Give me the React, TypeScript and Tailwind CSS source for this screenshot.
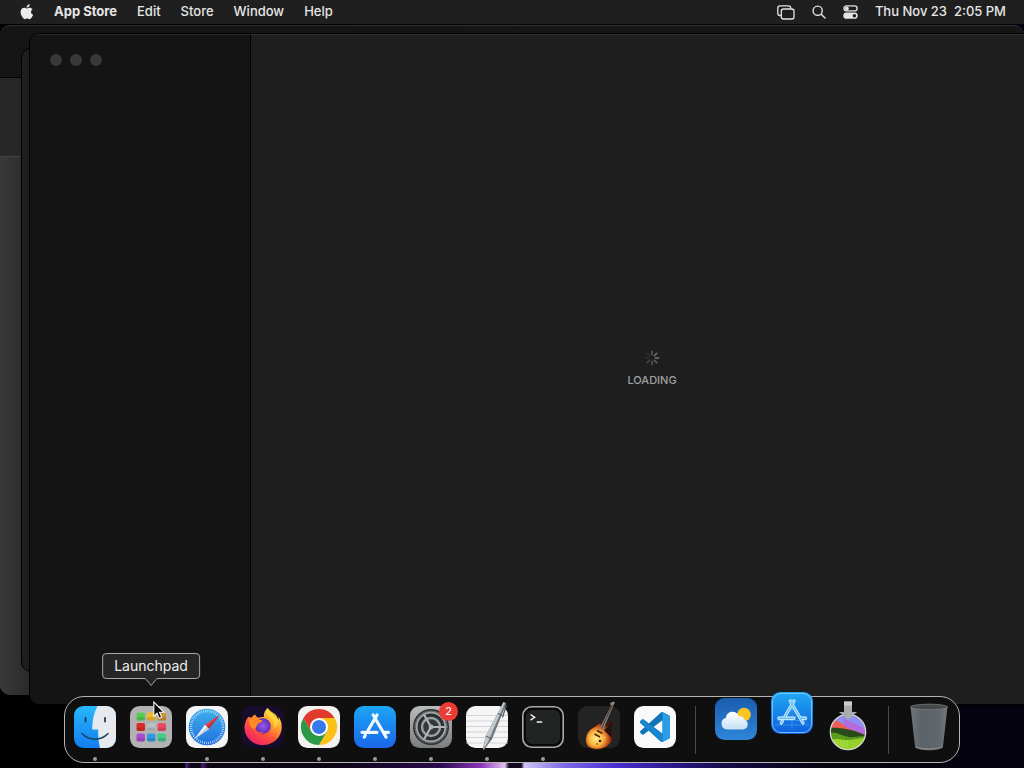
import { useId } from "react";
import type { ReactNode } from "react";

const MENUS = ["Edit", "Store", "Window", "Help"];

const AppleLogo = () => (
  <svg viewBox="0 0 14 17" className="h-4 w-[14px]" fill="#ececec" aria-hidden="true">
    <path d="M9.9 0c.1 1-.3 2-.9 2.700-.6.7-1.500 1.200-2.400 1.100C6.500 2.900 7 1.900 7.500 1.300 8.100.6 9.100.1 9.900 0Z" />
    <path d="M13 5.700c-1.100.7-1.700 1.600-1.700 2.800 0 1.400.8 2.500 2.200 3-.3.900-.8 1.800-1.400 2.700-.7 1-1.300 1.900-2.400 1.900-1 0-1.300-.6-2.500-.6s-1.600.6-2.500.6c-1 0-1.700-.9-2.400-1.900C1 12.400.2 10.500.2 8.600c0-3 1.900-4.500 3.800-4.500 1.100 0 2 .7 2.700.7.600 0 1.700-.8 3-.8 1.300 0 2.500.6 3.300 1.700Z" />
  </svg>
);

const MirrorIcon = () => (
  <svg viewBox="0 0 18 15" className="h-[15px] w-[18px]" fill="none" stroke="#e4e4e4" strokeWidth="1.300" aria-hidden="true">
    <path d="M4 10.500H3A2.200 2.200 0 0 1 .8 8.300V3A2.200 2.200 0 0 1 3 .8h8.500A2.200 2.200 0 0 1 13.700 3v.7" />
    <rect x="4.300" y="4" width="12.700" height="10" rx="2.200" />
  </svg>
);

const SearchIcon = () => (
  <svg viewBox="0 0 14 14" className="h-[14px] w-[14px]" fill="none" stroke="#e4e4e4" strokeWidth="1.400" strokeLinecap="round" aria-hidden="true">
    <circle cx="5.700" cy="5.700" r="4.600" />
    <path d="m9.200 9.200 3.800 3.900" />
  </svg>
);

const ControlCenterIcon = () => (
  <svg viewBox="0 0 15 14" className="h-[14px] w-[15px]" aria-hidden="true">
    <rect x=".9" y=".9" width="13.200" height="5" rx="2.500" fill="none" stroke="#e4e4e4" strokeWidth="1.300" />
    <circle cx="3.800" cy="3.400" r="2" fill="#e4e4e4" />
    <rect x=".3" y="7.600" width="14.400" height="6.200" rx="3.100" fill="#e4e4e4" />
    <circle cx="11.400" cy="10.700" r="1.800" fill="#202020" />
  </svg>
);

const FinderIcon = () => {
  const id = useId();
  return (
    <svg viewBox="0 0 42 42" aria-hidden="true">
      <defs>
        <linearGradient id={id} x2="0" y2="1">
          <stop stopColor="#27b9fa" />
          <stop offset="1" stopColor="#137df0" />
        </linearGradient>
        <clipPath id={`${id}c`}>
          <rect width="42" height="42" rx="9.500" />
        </clipPath>
      </defs>
      <g clipPath={`url(#${id}c)`}>
        <rect width="42" height="42" fill={`url(#${id})`} />
        <path d="M23.500 0C20 7 18.300 14 18.200 23.500h6C24 30 24.500 36 26 42h16V0Z" fill="#e6e9ee" />
      </g>
      <path d="M11.500 11.800v3.800M31 11.800v3.800" stroke="#14304c" strokeWidth="1.700" strokeLinecap="round" />
      <path d="M8 27.500c7 7.500 19 7.500 26 0" fill="none" stroke="#1c4263" strokeWidth="1.500" strokeLinecap="round" />
    </svg>
  );
};

const PADS = ["#52cf4f", "#f3bb25", "#c9952b", "#d92b28", "#b9c2c0", "#ec4a62", "#a94cd2", "#2e9ce5", "#44c98a"];

const LaunchpadIcon = () => (
  <svg viewBox="0 0 42 42" aria-hidden="true">
    <rect width="42" height="42" rx="9.500" fill="#b3b2b3" />
    {PADS.map((color, i) => (
      <g key={color}>
        <rect x={6.5 + (i % 3) * 10.5} y={6.5 + Math.floor(i / 3) * 10.5} width="8.500" height="8" rx="1.800" fill={color} />
        <rect x={6.5 + (i % 3) * 10.5} y={11 + Math.floor(i / 3) * 10.5} width="8.500" height="3.500" rx="1.500" fill="#000" opacity=".12" />
      </g>
    ))}
  </svg>
);

const SafariIcon = () => {
  const id = useId();
  return (
    <svg viewBox="0 0 42 42" aria-hidden="true">
      <defs>
        <linearGradient id={id} x2="0" y2="1">
          <stop stopColor="#3fb0ec" />
          <stop offset="1" stopColor="#2070df" />
        </linearGradient>
      </defs>
      <rect width="42" height="42" rx="9.500" fill="#f4f4f4" />
      <circle cx="21" cy="21" r="18.300" fill={`url(#${id})`} />
      <circle cx="21" cy="21" r="16" fill="none" stroke="#d6ecfb" strokeWidth="2.400" strokeDasharray=".7 1.394" />
      <path d="M33.500 9 19 18.800l4 4.200Z" fill="#e8413b" />
      <path d="M8.500 33 23 23l-4-4.200Z" fill="#f3f5f7" />
      <path d="M33.500 9 23 23l-2-2.100Z" fill="#b9343a" />
      <path d="M8.500 33 23 23l-2-2.100Z" fill="#c5ccd4" />
    </svg>
  );
};

const FirefoxIcon = () => {
  const id = useId();
  return (
    <svg viewBox="0 0 42 42" aria-hidden="true">
      <defs>
        <linearGradient id={id} x1=".85" y1=".05" x2=".25" y2=".95">
          <stop stopColor="#fff04a" />
          <stop offset=".35" stopColor="#ffa52c" />
          <stop offset=".65" stopColor="#ff5238" />
          <stop offset="1" stopColor="#ee2469" />
        </linearGradient>
        <radialGradient id={`${id}g`}>
          <stop stopColor="#9c55f5" />
          <stop offset="1" stopColor="#5b2fb2" />
        </radialGradient>
      </defs>
      <rect width="42" height="42" rx="9.500" fill="#170c2c" />
      <path
        d="M25.500 2c-3 3-4 6-3.500 9-2-.3-4 0-5.500.8-1.700-.6-2.800-1.800-3.300-3.300-1.700.8-3 2-3.900 3.300l-3-1C3.500 14.500 2.500 18 2.500 21.500 2.500 31.500 10.500 39 21 39s18.700-7.800 18.700-18c0-4-1.200-8-3.500-10.500.3 1.500.4 2.700.2 3.800C34.500 9 28.500 7.500 25.500 2Z"
        fill={`url(#${id})`}
      />
      <path d="M26 2c-2 5 .5 8.500 4 12 2 2.400 2.500 6 1.500 9 5-4 5.500-9 3-13.500-2.500-3.200-6.500-3.500-8.500-7.500Z" fill="#ffd83d" opacity=".8" />
      <circle cx="21" cy="20" r="7.800" fill={`url(#${id}g)`} />
      <path d="M7 14c3.500-2.800 7-2.300 9.500-.5 1.700.4 3 .3 4 1-1.500 2.500-4.500 2.500-5.500 4.500-.5 2.500-1.300 2.800-2.500 4C9 22.500 7 19 7 14Z" fill="#ff8a25" />
      <path d="M11 22.500c3 4 7 4.500 10.500 3-2.500 3-8.500 3.500-10.500-3Z" fill="#ff5a36" />
    </svg>
  );
};

const ChromeIcon = () => (
  <svg viewBox="0 0 42 42" aria-hidden="true">
    <rect width="42" height="42" rx="9.500" fill="#f3f2f1" />
    <path d="M21 12h15.600A18 18 0 0 1 21 39l7.800-13.500Z" fill="#fbc116" />
    <path d="M13.200 25.500 5.400 12A18 18 0 0 0 21 39l7.800-13.500Z" fill="#2a9a48" />
    <path d="M21 12h15.600A18 18 0 0 0 5.400 12l7.800 13.500Z" fill="#e2392d" />
    <circle cx="21" cy="21" r="9" fill="#fff" />
    <circle cx="21" cy="21" r="7" fill="#3478ea" />
  </svg>
);

const AppStoreGlyph = ({ stroke, width }: { stroke: string; width: number }) => (
  <g fill="none" stroke={stroke} strokeWidth={width} strokeLinecap="round">
    <path d="M23 9 14 24.500M19.200 9 32 31M8 26.300h15M29.300 26.300H34.500M11.300 29.200 10.300 31" />
  </g>
);

const AppStoreIcon = () => {
  const id = useId();
  return (
    <svg viewBox="0 0 42 42" aria-hidden="true">
      <defs>
        <linearGradient id={id} x2="0" y2="1">
          <stop stopColor="#1ba6f6" />
          <stop offset="1" stopColor="#1a66e8" />
        </linearGradient>
      </defs>
      <rect width="42" height="42" rx="9.500" fill={`url(#${id})`} />
      <AppStoreGlyph stroke="#f2f8ff" width={3.2} />
    </svg>
  );
};

const BlueprintIcon = () => {
  const id = useId();
  return (
    <svg viewBox="0 0 42 42" aria-hidden="true">
      <defs>
        <linearGradient id={id} x2="0" y2="1">
          <stop stopColor="#20a8f2" />
          <stop offset="1" stopColor="#0e5fdc" />
        </linearGradient>
      </defs>
      <rect width="42" height="42" rx="9.500" fill={`url(#${id})`} />
      <rect x="1.500" y="1.500" width="39" height="39" rx="8.500" fill="none" stroke="#7cc6f8" strokeWidth=".9" />
      <path d="M6.500 24.300h29v4.200h-29ZM21 4v34M4 33h34" fill="none" stroke="#9bd6fb" strokeWidth=".5" opacity=".5" />
      <AppStoreGlyph stroke="#c9e9fd" width={3.4} />
      <AppStoreGlyph stroke="#5db9f3" width={1.2} />
    </svg>
  );
};

const SettingsIcon = () => {
  const id = useId();
  return (
    <svg viewBox="0 0 42 42" aria-hidden="true">
      <defs>
        <linearGradient id={id} x2="0" y2="1">
          <stop stopColor="#b9bcbc" />
          <stop offset="1" stopColor="#7b7e7f" />
        </linearGradient>
      </defs>
      <rect width="42" height="42" rx="9.500" fill={`url(#${id})`} />
      <circle cx="21" cy="21" r="18" fill="#2c3032" />
      <circle cx="21" cy="21" r="15.800" fill="none" stroke="#7b8183" strokeWidth="1.600" strokeDasharray="1.100 .555" />
      <circle cx="21" cy="21" r="14.300" fill="none" stroke="#a1a7a9" strokeWidth="1.800" />
      <circle cx="21" cy="21" r="9" fill="#33383a" stroke="#9ba1a3" strokeWidth="2.400" />
      <path d="M21 21h14M21 21l-7-12.200M21 21l-7 12.200" stroke="#b0b5b7" strokeWidth="2.200" />
      <circle cx="21" cy="21" r="2.400" fill="#b0b5b7" />
    </svg>
  );
};

const TextEditIcon = () => (
  <svg viewBox="0 0 42 42" className="overflow-visible" aria-hidden="true">
    <rect width="42" height="42" rx="9.500" fill="#f6f6f6" />
    <path d="M0 9.500h42M0 15h42M0 20.500h42M0 26h42M0 31.500h42M0 37h42" stroke="#c9cbce" strokeWidth=".8" />
    <path d="m37.500-4 3 1.500L26 33l-8 11-1.300-.7L19.800 30Z" fill="#71787e" />
    <path d="m37.500-4 1.500.7L21.500 37l-4.500 6.500L19.800 30Z" fill="#c2c9cd" />
    <path d="m32 7.500 4.500 2M19.800 30l6.200 3" stroke="#4d5358" strokeWidth="1" />
    <path d="m40.300-.5-3.800 12" stroke="#50565b" strokeWidth="1.200" />
  </svg>
);

const TerminalIcon = () => (
  <svg viewBox="0 0 42 42" aria-hidden="true">
    <rect x=".8" y=".8" width="40.400" height="40.400" rx="9" fill="#080909" stroke="#aaa" strokeWidth="1.600" />
    <rect x="4" y="4" width="34" height="34" rx="6.500" fill="#222424" />
    <path d="m8.500 8.500 4.200 2.800-4.200 2.800M14.700 16h5.500" fill="none" stroke="#f0f0f0" strokeWidth="1.400" />
  </svg>
);

const GarageBandIcon = () => {
  const id = useId();
  return (
    <svg viewBox="0 0 42 42" className="overflow-visible" aria-hidden="true">
      <defs>
        <radialGradient id={id} cx=".38" cy=".62" r=".62">
          <stop stopColor="#fff08a" />
          <stop offset=".4" stopColor="#f9b940" />
          <stop offset=".68" stopColor="#cf5a20" />
          <stop offset="1" stopColor="#3c130c" />
        </radialGradient>
      </defs>
      <rect width="42" height="42" rx="9.500" fill="#242323" />
      <path d="M15 21.500c2.500-1 4-2.500 5.500-4 1.200-1 2.700-.3 3.500 1l4 .5c2.500-.2 4.500-4.500 7-4 1.500 2-1.500 5-1.300 8 .2 3 2 5 1 9.500-1.700 6.500-8 10.500-15 10.800-7 .2-12.300-3-12.100-9.300C7.800 27.500 11 24 15 21.500Z" fill={`url(#${id})`} stroke="#3a160f" strokeWidth=".8" />
      <path d="M26 24c3-1.500 5-5 8.500-7.500-1 3-2 5-1.300 8 .5 3 1 5 .3 8-1.500-3-4.500-5-7.500-8.500Z" fill="#241210" />
      <path d="M32-2.500c1-1.500 3-2 4.500-1.700.8.700 0 2-.8 3L25 24l-3.500-1.500L33 0Z" fill="#8f827a" />
      <path d="M34.300-1 23.500 22.500" stroke="#4e423c" strokeWidth="1.200" />
      <path d="m19 24.500 5.500 3M16.500 28l5.500 3" stroke="#512412" strokeWidth="1.500" />
      <circle cx="22" cy="35" r="1.300" fill="#30170f" />
      <circle cx="19" cy="38" r=".8" fill="#5b2a14" />
      <circle cx="27" cy="31.500" r=".8" fill="#f6d98c" />
    </svg>
  );
};

const VSCodeIcon = () => (
  <svg viewBox="0 0 42 42" aria-hidden="true">
    <rect width="42" height="42" rx="9.500" fill="#fafafa" />
    <g transform="translate(6 6) scale(1.250)">
      <path
        d="M23.150 2.587 18.210.21a1.494 1.494 0 0 0-1.705.29l-9.460 8.630-4.120-3.128a1 1 0 0 0-1.276.057L.327 7.261a1 1 0 0 0 0 1.479L3.899 12 .326 15.260a1 1 0 0 0 0 1.479l1.323 1.201a1 1 0 0 0 1.276.057l4.120-3.128 9.460 8.630a1.492 1.492 0 0 0 1.704.29l4.942-2.377A1.500 1.500 0 0 0 24 20.060V3.939a1.500 1.500 0 0 0-.850-1.352Zm-5.146 14.861L10.826 12l7.178-5.448Z"
        fill="#1173b8"
      />
      <path d="m7.050 9.130-4.120-3.128a1 1 0 0 0-1.280.057L.327 7.261a1 1 0 0 0 0 1.479L16.500 23.500c.5.500 1.100.5 1.500 0v-6.050Z" fill="#1a86cf" />
      <path d="M23.150 2.587 18.210.21a1.500 1.500 0 0 0-1.300 0c.7.200 1.100.8 1.100 1.500v20.600c0 .7-.4 1.300-1.100 1.500.4.200.9.200 1.300 0l4.940-2.400A1.500 1.500 0 0 0 24 20.060V3.939a1.500 1.500 0 0 0-.850-1.352Z" fill="#2a9de6" />
    </g>
  </svg>
);

const WeatherIcon = () => {
  const id = useId();
  return (
    <svg viewBox="0 0 42 42" aria-hidden="true">
      <defs>
        <linearGradient id={id} x2="0" y2="1">
          <stop stopColor="#1b5cae" />
          <stop offset="1" stopColor="#2d86d8" />
        </linearGradient>
        <linearGradient id={`${id}w`} x2="0" y2="1">
          <stop stopColor="#fff" />
          <stop offset="1" stopColor="#c5dff5" />
        </linearGradient>
      </defs>
      <rect width="42" height="42" rx="9.500" fill={`url(#${id})`} />
      <circle cx="29" cy="16.500" r="6.800" fill="#fbc526" />
      <path d="M12 31.500a5.800 5.800 0 0 1-1.200-11.400c.4-4 3.200-6.300 6.700-6.300 3 0 5.300 1.700 6.300 4.400 3.300-.4 5.400 1.400 5.900 3.800 1.900.5 3 2.200 3 4.300 0 2.900-2 5.200-5 5.200Z" fill={`url(#${id}w)`} />
    </svg>
  );
};

const SonomaIcon = () => {
  const id = useId();
  return (
    <svg viewBox="0 0 42 42" className="overflow-visible" aria-hidden="true">
      <defs>
        <clipPath id={id}>
          <circle cx="21" cy="26" r="17.500" />
        </clipPath>
      </defs>
      <g clipPath={`url(#${id})`}>
        <path d="M2 6h38v38H2Z" fill="#8f8df0" />
        <path d="M2 14c8-1 13 4 18 6s13 3 20 8v8H2Z" fill="#ee5f5a" />
        <path d="M17 12c7 6 14 5 23 13v4c-9-2-15-5-23-9Z" fill="#b36be0" />
        <path d="M2 22c8-1 22 0 38 8v14H2Z" fill="#2a4a1c" />
        <path d="M2 27c7-2 13 3 20 4s11-2 18 0v14H2Z" fill="#5a9c1e" />
        <path d="M2 34c10-3 14 1 20 0s11-1 18-3v13H2Z" fill="#96d129" />
        <path d="M8 34v4M11 34v6M14 34v6M17 34v7M20 34v7" stroke="#d9ef86" strokeWidth=".6" opacity=".8" />
      </g>
      <circle cx="21" cy="26" r="17.700" fill="none" stroke="#d5d8d2" strokeWidth="1.300" />
      <path d="M17-4.500h8V6h5l-9 8-9-8h5Z" fill="#a8abb0" />
      <path d="M17-4.500h8v4h-8Z" fill="#c9ccd0" />
    </svg>
  );
};

const TrashIcon = () => {
  const id = useId();
  return (
    <svg viewBox="0 0 42 42" className="overflow-visible" aria-hidden="true">
      <defs>
        <linearGradient id={id}>
          <stop stopColor="#737578" />
          <stop offset=".3" stopColor="#5b6268" />
          <stop offset=".75" stopColor="#5f666c" />
          <stop offset="1" stopColor="#77797c" />
        </linearGradient>
      </defs>
      <path d="M2.500.5 7 40.500c.5 5 27.500 5 28 0L39.500.5Z" fill={`url(#${id})`} />
      <path d="M7 40c.8 5 27.200 5 28 0-5 3-23 3-28 0Z" fill="#86888a" />
      <ellipse cx="21" cy="1" rx="18.500" ry="2.800" fill="#464849" stroke="#7b7d7f" strokeWidth=".8" />
    </svg>
  );
};

const Cursor = () => (
  <svg viewBox="0 0 13 19" className="absolute -top-[5px] left-[23px] z-10 h-[19px] w-[13px]" aria-hidden="true">
    <path d="M.8 1v14.300l3.200-3 2.200 5.100 2.500-1.100-2.200-5h4.600Z" fill="#080808" stroke="#f5f5f5" strokeWidth="1.100" />
  </svg>
);

const Spinner = () => (
  <svg viewBox="0 0 16 16" className="size-4" strokeWidth="1.400" strokeLinecap="round" aria-hidden="true">
    {[0.45, 0.6, 0.6, 0.5, 0.4, 0.3, 0.12, 0.15].map((opacity, i) => (
      <path key={i} d="M8 1.200v3.600" stroke="#b0b0b0" opacity={opacity} transform={`rotate(${i * 45} 8 8)`} />
    ))}
  </svg>
);

interface DockItemProps {
  name: string;
  icon: ReactNode;
  running?: boolean;
  lift?: string;
  children?: ReactNode;
}

const DockItem = ({ name, icon, running, lift = "", children }: DockItemProps) => (
  <li className={`relative size-[42px] shrink-0 ${lift}`}>
    <button type="button" aria-label={name} className="block size-[42px]">
      {icon}
    </button>
    {running && <span className="absolute top-[51px] left-[19px] size-1 rounded-full bg-[#9b9b9b]" />}
    {children}
  </li>
);

const Separator = () => <li role="separator" className="mx-[5px] h-12 w-px shrink-0 bg-[#4a4a4a]" />;

const Tooltip = ({ label }: { label: string }) => (
  <div role="tooltip" className="absolute bottom-[69px] left-1/2 -translate-x-1/2 rounded border border-[#a8a8a8] bg-[#262626] px-[11px] text-sm leading-6 text-[#eeeeee]">
    {label}
    <svg viewBox="0 0 16 9" className="absolute top-full left-1/2 h-[9px] w-4 -translate-x-1/2" aria-hidden="true">
      <path d="M0 0c3 0 3.500 2 8 7.500C12.500 2 13 0 16 0Z" fill="#262626" />
      <path d="M0 .5c3 0 3.500 1.500 8 7 4.500-5.500 5-7 8-7" fill="none" stroke="#a8a8a8" />
    </svg>
  </div>
);

const MenuBar = () => (
  <header className="relative flex h-6 items-center justify-between bg-[#1f1f1f] pr-[18px] pl-5 text-[13px] font-medium text-[#e6e6e6]">
    <nav className="flex items-center gap-5">
      <button type="button" aria-label="Apple menu">
        <AppleLogo />
      </button>
      <button type="button" className="font-bold">App Store</button>
      {MENUS.map((menu) => (
        <button key={menu} type="button">{menu}</button>
      ))}
    </nav>
    <div className="flex items-center gap-[17px]">
      <button type="button" aria-label="Screen mirroring"><MirrorIcon /></button>
      <button type="button" aria-label="Search"><SearchIcon /></button>
      <button type="button" aria-label="Control Center"><ControlCenterIcon /></button>
      <time className="whitespace-pre">Thu Nov 23  2:05 PM</time>
    </div>
  </header>
);

const BackgroundWindows = () => (
  <>
    <div className="absolute top-[25px] right-0 bottom-[73px] left-0 flex flex-col overflow-hidden rounded-[10px] border-t border-[#303030] bg-[#343434]">
      <div className="h-[52px] border-b border-black bg-[#151515]" />
      <div className="h-[79px] border-b border-[#444444] bg-[#272727]" />
      <div className="w-[30px] flex-1 bg-linear-to-r from-[#393939] to-[#2a2a2a]" />
    </div>
    <div className="absolute top-12 right-10 bottom-24 left-[21px] rounded-[10px] border border-black bg-[#1e1e1e]" />
  </>
);

// the window hangs over the right edge of the screen
const AppStoreWindow = () => (
  <main className="absolute top-[33px] -right-[30px] bottom-[63px] left-[29px] flex overflow-hidden rounded-[10px] border border-black">
    <aside className="w-[221px] shrink-0 border-t border-r border-t-[#272727] border-r-black bg-[#141414] px-5 pt-[19px]">
      <div className="flex gap-2">
        <button type="button" aria-label="Close" className="size-3 rounded-full bg-[#393939]" />
        <button type="button" aria-label="Minimize" className="size-3 rounded-full bg-[#393939]" />
        <button type="button" aria-label="Zoom" className="size-3 rounded-full bg-[#393939]" />
      </div>
    </aside>
    <section className="flex flex-1 flex-col items-center justify-center gap-1.5 border-t border-[#333333] bg-[#1e1e1e] pb-0.5">
      <Spinner />
      <p className="text-[11px] leading-4 font-medium text-[#a0a0a0]">LOADING</p>
    </section>
  </main>
);

const Dock = () => (
  <ul className="absolute bottom-[5px] left-1/2 flex h-[67px] -translate-x-1/2 items-start gap-[14px] rounded-[20px] border border-[#b4b4b4] bg-[#0f0f0f] px-[9px] pt-[9px]">
    <DockItem name="Finder" icon={<FinderIcon />} running />
    <DockItem name="Launchpad" icon={<LaunchpadIcon />}>
      <Tooltip label="Launchpad" />
      <Cursor />
    </DockItem>
    <DockItem name="Safari" icon={<SafariIcon />} running />
    <DockItem name="Firefox" icon={<FirefoxIcon />} running />
    <DockItem name="Chrome" icon={<ChromeIcon />} running />
    <DockItem name="App Store" icon={<AppStoreIcon />} running />
    <DockItem name="System Settings" icon={<SettingsIcon />} running>
      <span className="absolute -top-1 -right-1.5 flex size-[19px] items-center justify-center rounded-full bg-[#ec3b35] text-[11px] text-white">2</span>
    </DockItem>
    <DockItem name="TextEdit" icon={<TextEditIcon />} running />
    <DockItem name="Terminal" icon={<TerminalIcon />} running />
    <DockItem name="GarageBand" icon={<GarageBandIcon />} />
    <DockItem name="Visual Studio Code" icon={<VSCodeIcon />} />
    <Separator />
    <DockItem name="Weather" icon={<WeatherIcon />} lift="-mt-2" />
    <DockItem name="Blueprint" icon={<BlueprintIcon />} lift="-mt-3.5" />
    <DockItem name="Install macOS" icon={<SonomaIcon />} />
    <Separator />
    <DockItem name="Trash" icon={<TrashIcon />} />
  </ul>
);

const App = () => (
  <div className="relative h-screen overflow-hidden bg-linear-to-r from-black via-[#07030c] to-[#03020e] font-['Inter','Liberation_Sans',sans-serif]">
    {/* wallpaper glow under the dock */}
    <div className="absolute inset-x-0 bottom-0 h-3 bg-[linear-gradient(90deg,transparent_18%,#4a1f86_18.200%,#0b0414_18.600%,#0b0414_19.500%,#4b1a70_19.800%,#0b0414_20.300%,#0b0414_33%,#2a0a4e_43%,#8a35b8_47%,#e3c4ee_49.300%,#140820_49.700%,#140820_50.900%,#cfc6f4_51.200%,#7d6be8_55%,#4a2fd0_60%,#2c1a94_65%,#160a44_71%,#080312_80%,transparent_92%)]" />
    <BackgroundWindows />
    <AppStoreWindow />
    <MenuBar />
    <Dock />
  </div>
);

export default App;
